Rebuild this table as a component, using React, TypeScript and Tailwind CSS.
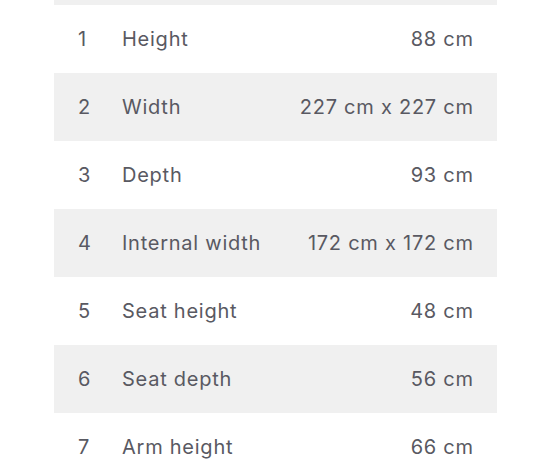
import React from 'react';

type Spec = { id: number; label: string; value: string };

const specs: Spec[] = [
  { id: 1, label: 'Height', value: '88 cm' },
  { id: 2, label: 'Width', value: '227 cm x 227 cm' },
  { id: 3, label: 'Depth', value: '93 cm' },
  { id: 4, label: 'Internal width', value: '172 cm x 172 cm' },
  { id: 5, label: 'Seat height', value: '48 cm' },
  { id: 6, label: 'Seat depth', value: '56 cm' },
  { id: 7, label: 'Arm height', value: '66 cm' },
];

export default function App() {
  return (
    <div className="w-[560px] h-[469px] overflow-hidden bg-white font-['Inter',sans-serif] text-[#595962]">
      <div className="ml-[54px] w-[443px] flex flex-col">
        {/* tail of the previous (shaded) row */}
        <div className="h-[5px] bg-[#f0f0f0]" />
        {specs.map(spec => (
          <div
            key={spec.id}
            className={`h-[68px] shrink-0 flex items-center pl-[24px] pr-[24px] text-[20px] tracking-[0.75px] ${spec.id % 2 === 0 ? 'bg-[#f0f0f0]' : 'bg-white'}`}
          >
            <span className="w-[44px]">{spec.id}</span>
            <span className="flex-1">{spec.label}</span>
            <span className="-mr-[0.75px]">{spec.value}</span>
          </div>
        ))}
      </div>
    </div>
  );
}
